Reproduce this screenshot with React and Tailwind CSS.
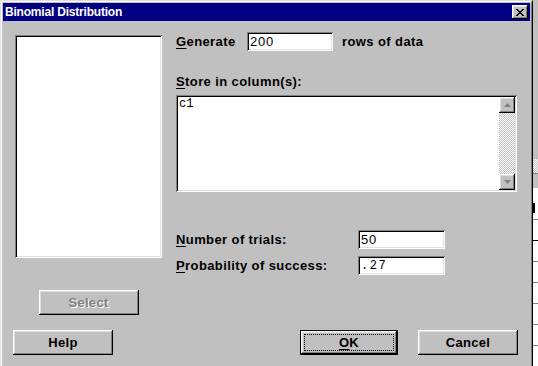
const raised =
  'shadow-[inset_-1px_-1px_0_#000000,inset_1px_1px_0_#ffffff,inset_-2px_-2px_0_#808080,inset_2px_2px_0_#dfdfdf]';
const sunken =
  'shadow-[inset_1px_1px_0_#808080,inset_-1px_-1px_0_#ffffff,inset_2px_2px_0_#000000,inset_-2px_-2px_0_#dfdfdf]';
const hatch =
  'bg-[repeating-conic-gradient(#c0c0c0_0%_25%,#ffffff_0%_50%)] bg-[length:2px_2px]';

const Field = ({ width, mono, children }) => (
  <div className={`${width} h-[19px] bg-white ${sunken} flex items-center pl-[3px] font-normal`}>
    {mono ? (
      <span className="font-['Liberation_Mono',monospace] text-[12px] tracking-[1.5px] text-black">{children}</span>
    ) : (
      <span className="text-[13px] tracking-[0.8px] text-black">{children}</span>
    )}
  </div>
);

const Arrow = ({ down }) => (
  <div className={`h-[16px] bg-[#c0c0c0] ${raised} flex items-center justify-center`}>
    <svg width="7" height="4" viewBox="0 0 7 4">
      {down ? (
        <path d="M0 0h7L3.5 4z" fill="#808080" />
      ) : (
        <path d="M3.5 0L7 4H0z" fill="#808080" />
      )}
    </svg>
  </div>
);

const Button = ({ width, children, className = '' }) => (
  <div
    className={`${width} h-[25px] bg-[#c0c0c0] ${raised} flex items-center justify-center font-bold text-[13px] tracking-[0.3px] text-black ${className}`}
  >
    {children}
  </div>
);

const App = () => {
  return (
    <div className="w-[538px] h-[366px] overflow-hidden flex bg-[#c0c0c0] font-['Liberation_Sans',Arial,sans-serif]">
      {/* dialog */}
      <div className="w-[533px] h-[380px] shrink-0 border border-t-[#dfdfdf] border-l-[#dfdfdf] border-r-black border-b-black">
        <div className="h-full border border-t-white border-l-white border-r-[#808080] border-b-[#808080] p-px flex flex-col">
          {/* title bar */}
          <div className="h-[18px] bg-[#000080] flex items-center justify-between pl-[2px] pr-[2px]">
            <span className="text-white font-bold text-[12px] tracking-[-0.2px]">Binomial Distribution</span>
            <div className={`w-[16px] h-[14px] bg-[#c0c0c0] ${raised} flex items-center justify-center`}>
              <svg width="8" height="7" viewBox="0 0 8 7" shapeRendering="crispEdges">
                <path
                  d="M0 0h2v1h1v1h2v-1h1v-1h2v1h-1v1h-1v1h-1v1h1v1h1v1h1v1h-2v-1h-1v-1h-2v1h-1v1h-2v-1h1v-1h1v-1h1v-1h-1v-1h-1v-1h-1z"
                  fill="#000"
                />
              </svg>
            </div>
          </div>

          {/* body */}
          <div className="flex-1 flex flex-col text-black">
            <div className="flex pt-[11px]">
              {/* variable list */}
              <div className="ml-[12px] w-[147px] flex flex-col">
                <div className={`mt-[3px] h-[223px] bg-white ${sunken}`} />
                <Button width="w-[100px]" className="mt-[32px] self-center">
                  <span className="text-[#808080] [text-shadow:1px_1px_0_#ffffff]">Select</span>
                </Button>
              </div>

              {/* fields */}
              <div className="ml-[14px] w-[341px] flex flex-col text-[13px] font-bold tracking-[0.4px]">
                <div className="h-[19px] flex items-center">
                  <span className="w-[71px]">
                    <u className="underline-offset-2">G</u>enerate
                  </span>
                  <Field width="w-[86px]">200</Field>
                  <span className="ml-[9px]">rows of data</span>
                </div>

                <div className="mt-[23px] leading-[16px]">
                  <u className="underline-offset-2">S</u>tore in column(s):
                </div>

                <div className={`mt-[5px] h-[97px] bg-white ${sunken} flex p-[2px]`}>
                  <div className="flex-1 pl-[1px] font-['Liberation_Mono',monospace] text-[12px] font-normal tracking-normal leading-[15px]">
                    c1
                  </div>
                  <div className="w-[16px] flex flex-col">
                    <Arrow />
                    <div className={`flex-1 ${hatch}`} />
                    <Arrow down />
                  </div>
                </div>

                <div className="mt-[38px] h-[19px] flex items-center">
                  <span className="w-[182px]">
                    <u className="underline-offset-2">N</u>umber of trials:
                  </span>
                  <Field width="w-[87px]">50</Field>
                </div>

                <div className="mt-[7px] h-[19px] flex items-center">
                  <span className="w-[182px]">
                    <u className="underline-offset-2">P</u>robability of success:
                  </span>
                  <Field width="w-[87px]" mono>
                    .27
                  </Field>
                </div>
              </div>
            </div>

            {/* buttons */}
            <div className="mt-[15px] flex h-[25px]">
              <Button width="w-[100px]" className="ml-[10px]">
                Help
              </Button>
              <div className="ml-[187px] w-[98px] h-[25px] bg-[#c0c0c0] shadow-[inset_0_0_0_1px_#000000,inset_-2px_-2px_0_#000000,inset_2px_2px_0_#ffffff,inset_-3px_-3px_0_#808080,inset_3px_3px_0_#dfdfdf] p-[4px] flex">
                <div className="flex-1 border border-dotted border-black flex items-center justify-center font-bold text-[13px] tracking-[0.3px]">
                  <span>
                    <u className="underline-offset-2">O</u>K
                  </span>
                </div>
              </div>
              <Button width="w-[100px]" className="ml-[20px]">
                Cancel
              </Button>
            </div>
          </div>
        </div>
      </div>

      {/* worksheet behind the dialog */}
      <div className="flex-1 flex flex-col">
        <div className="h-[172px] bg-[#c0c0c0]" />
        <div className={`h-[15px] ${hatch}`} />
        <div className="h-[16px] bg-[#c0c0c0] border-t border-[#808080]" />
        <div className="flex-1 bg-white flex flex-col">
          <div className="h-[31px] pt-[15px]">
            <div className="w-[2px] h-[10px] bg-black" />
          </div>
          <div className="h-[21px] border-t border-[#808080]" />
          <div className="h-[21px] border-t border-black" />
          <div className="h-[21px] border-t border-[#808080]" />
          <div className="h-[21px] border-t border-[#808080]" />
          <div className="h-[21px] border-t border-[#808080]" />
          <div className="h-[21px] border-t border-[#808080]" />
          <div className="h-[21px] border-t border-[#808080]" />
        </div>
      </div>
    </div>
  );
};

export default App;
